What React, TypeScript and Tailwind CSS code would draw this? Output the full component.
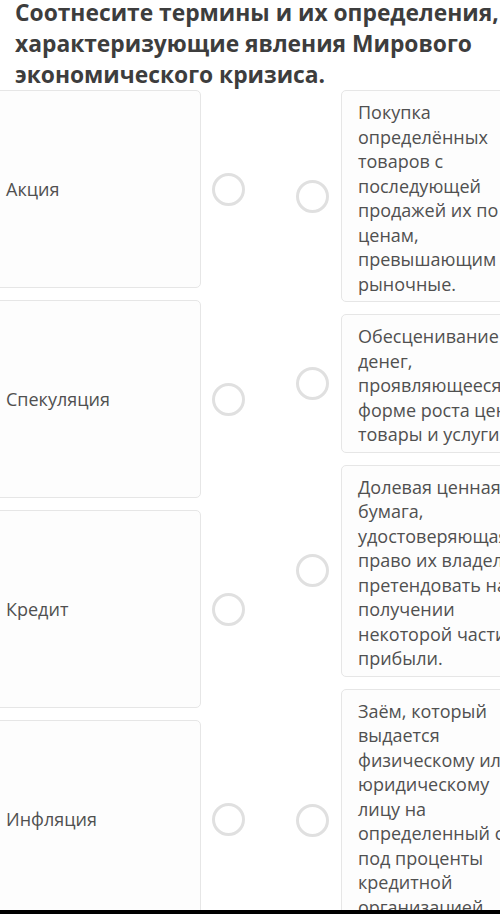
import React from "react";

const left = ["Акция", "Спекуляция", "Кредит", "Инфляция"];
const right: string[][] = [
  ["Покупка", "определённых", "товаров с", "последующей", "продажей их по", "ценам,", "превышающим", "рыночные."],
  ["Обесценивание", "денег,", "проявляющееся в", "форме роста цен на", "товары и услуги."],
  ["Долевая ценная", "бумага,", "удостоверяющая", "право их владельца", "претендовать на", "получении", "некоторой части", "прибыли."],
  ["Заём, который", "выдается", "физическому или", "юридическому", "лицу на", "определенный срок", "под проценты", "кредитной", "организацией."],
];

function Circle() {
  return <div className="w-[33px] h-[33px] shrink-0 rounded-full border-[3px] border-[#e0e0e0] bg-white" />;
}

export default function App() {
  return (
    <div
      className="relative w-[500px] h-[914px] overflow-hidden bg-white"
      style={{ fontFamily: '"Open Sans", "Noto Sans", sans-serif' }}
    >
      <h1 className="mt-[-3px] pl-[15px] w-[525px] text-[22.8px] leading-[31px] font-bold text-[#3d3d3d]">
        Соотнесите термины и их определения, характеризующие явления Мирового экономического кризиса.
      </h1>
      <div className="flex items-start">
        <div className="ml-[-11px] flex flex-col gap-[12px]">
          {left.map((t) => (
            <div key={t} className="flex items-center gap-[11px]">
              <div className="w-[212px] h-[198px] flex items-center rounded-[5px] border border-[#e6e6e6] bg-[#fdfdfd] pl-[16px] text-[18px] text-[#505050]">
                {t}
              </div>
              <Circle />
            </div>
          ))}
        </div>
        <div className="ml-[51px] flex flex-col gap-[12px]">
          {right.map((lines, i) => (
            <div key={i} className="flex items-center gap-[12px]">
              <Circle />
              <div
                className={
                  i === 3
                    ? "w-[212px] min-h-[264px] shrink-0 rounded-[5px] border border-[#e6e6e6] bg-[#fdfdfd] px-[16px] pt-[9px] pb-[5px] text-[18px] leading-[24.5px] text-[#505050] whitespace-nowrap"
                    : "w-[212px] shrink-0 rounded-[5px] border border-[#e6e6e6] bg-[#fdfdfd] px-[16px] pt-[9px] pb-[5px] text-[18px] leading-[24.5px] text-[#505050] whitespace-nowrap"
                }
              >
                {lines.map((l, j) => (
                  <div key={j}>{l}</div>
                ))}
              </div>
            </div>
          ))}
        </div>
      </div>
      <div className="fixed bottom-0 left-0 w-[500px] h-[4px] bg-black" />
    </div>
  );
}
